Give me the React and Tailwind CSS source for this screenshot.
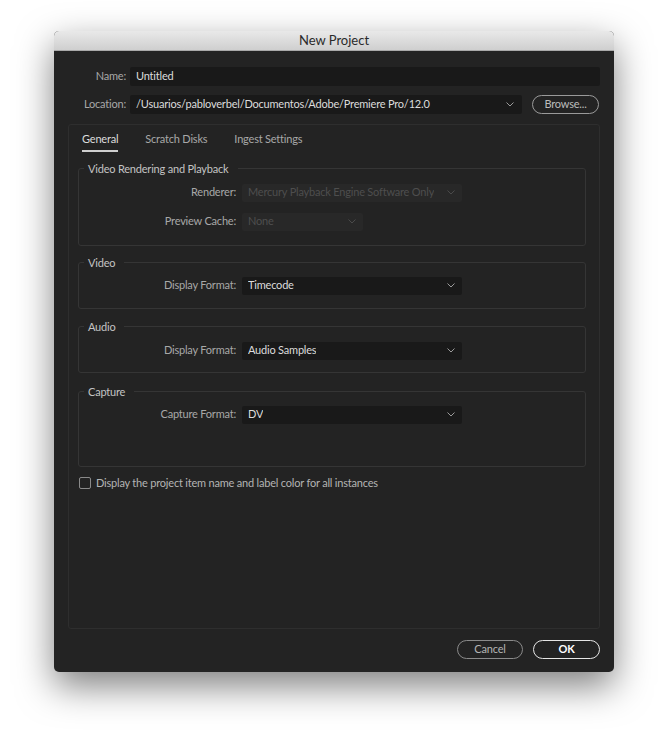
import React from 'react';

const Chevron = ({ className = '' }) => (
  <svg width="8" height="5" viewBox="0 0 8 5" className={className} fill="none">
    <path d="M0.5 0.5 L4 4 L7.5 0.5" stroke="currentColor" strokeWidth="1" />
  </svg>
);

const Select = ({ value, width = 'w-[220px]', disabled = false }) => (
  <div
    className={`${width} h-[18px] flex items-center justify-between pl-[6px] pr-[7px] rounded-[2px] ${
      disabled ? 'bg-[#282828] text-[#4e4e4e]' : 'bg-[#191919] text-[#dcdcdc]'
    }`}
  >
    <span className="truncate">{value}</span>
    <Chevron className={disabled ? 'text-[#4a4a4a]' : 'text-[#9a9a9a]'} />
  </div>
);

const Row = ({ label, children }) => (
  <div className="flex items-center">
    <div className="w-[162px] pr-[5px] text-right text-[#a8a8a8]">{label}</div>
    <div className="pl-px">{children}</div>
  </div>
);

const Group = ({ title, children, className = '' }) => (
  <fieldset className={`border border-[#353535] rounded-[3px] px-0 ${className}`}>
    <legend className="ml-[5px] pl-[4px] pr-[9px] text-[#c4c4c4] leading-[14px]">{title}</legend>
    {children}
  </fieldset>
);

const Pill = ({ children, className = '' }) => (
  <button className={`h-[19px] rounded-full flex items-center justify-center ${className}`}>{children}</button>
);

export default function App() {
  return (
    <div
      className="w-[668px] h-[750px] bg-white pt-[31px] pl-[54px]"
      style={{ fontFamily: 'Lato, "Liberation Sans", sans-serif' }}
    >
      <div className="w-[560px] h-[641px] rounded-[5px] overflow-hidden bg-[#232323] flex flex-col shadow-[0_14px_36px_rgba(0,0,0,0.5)] text-[11px] tracking-[-0.2px]">
        <div className="h-[20px] bg-gradient-to-b from-[#e9e9e9] to-[#cfcfcf] border-b border-[#a9a9a9] flex items-center justify-center text-[13px] tracking-normal text-[#2a2a2a]">
          New Project
        </div>

        <div className="flex-1 flex flex-col px-[14px] pb-[13px]">
          {/* name + location */}
          <div className="mt-[16px] flex items-center">
            <div className="w-[62px] pr-[4px] text-right text-[#a8a8a8]">Name:</div>
            <div className="flex-1 h-[19px] bg-[#191919] rounded-[2px] flex items-center px-[6px] text-[#dcdcdc]">
              Untitled
            </div>
          </div>
          <div className="mt-[9px] flex items-center">
            <div className="w-[62px] pr-[4px] text-right text-[#a8a8a8]">Location:</div>
            <div className="w-[392px] h-[19px] bg-[#191919] rounded-[2px] flex items-center justify-between pl-[6px] pr-[8px] text-[#dcdcdc]">
              <span>/Usuarios/pabloverbel/Documentos/Adobe/Premiere Pro/12.0</span>
              <Chevron className="text-[#9a9a9a]" />
            </div>
            <Pill className="ml-[10px] w-[67px] border-[1.5px] border-[#9a9a9a] text-[#bdbdbd]">Browse...</Pill>
          </div>

          {/* tab panel */}
          <div className="mt-[10px] flex-1 border border-[#2e2e2e] rounded-[3px] flex flex-col pl-[9px] pr-[13px]">
            <div className="flex items-center mt-[6px] pl-[4px] text-[#a8a8a8]">
              <div className="flex flex-col items-center text-[#dcdcdc]">
                <span>General</span>
                <div className="mt-[2px] h-[2px] w-full bg-[#cfcfcf]" />
              </div>
              <span className="ml-[27px] -mt-[4px]">Scratch Disks</span>
              <span className="ml-[27px] -mt-[4px]">Ingest Settings</span>
            </div>

            <Group title="Video Rendering and Playback" className="mt-[10px] h-[84px]">
              <div className="flex flex-col gap-[11px] pt-[8px]">
                <Row label="Renderer:">
                  <Select value="Mercury Playback Engine Software Only" disabled />
                </Row>
                <Row label="Preview Cache:">
                  <Select value="None" width="w-[121px]" disabled />
                </Row>
              </div>
            </Group>

            <Group title="Video" className="mt-[10px] h-[53px]">
              <div className="pt-[7px]">
                <Row label="Display Format:">
                  <Select value="Timecode" />
                </Row>
              </div>
            </Group>

            <Group title="Audio" className="mt-[11px] h-[53px]">
              <div className="pt-[8px]">
                <Row label="Display Format:">
                  <Select value="Audio Samples" />
                </Row>
              </div>
            </Group>

            <Group title="Capture" className="mt-[12px] h-[82px]">
              <div className="pt-[7px]">
                <Row label="Capture Format:">
                  <Select value="DV" />
                </Row>
              </div>
            </Group>

            <label className="mt-[8px] flex items-center text-[#b4b4b4]">
              <span className="w-[12px] h-[12px] border border-[#8a8a8a] rounded-[2px] ml-px mr-[5px]" />
              Display the project item name and label color for all instances
            </label>
          </div>

          {/* buttons */}
          <div className="mt-[11px] flex justify-end gap-[10px]">
            <Pill className="w-[66px] border-[1.5px] border-[#8a8a8a] text-[#b4b4b4]">Cancel</Pill>
            <Pill className="w-[67px] border-[1.5px] border-[#e6e6e6] text-white font-bold">OK</Pill>
          </div>
        </div>
      </div>
    </div>
  );
}
